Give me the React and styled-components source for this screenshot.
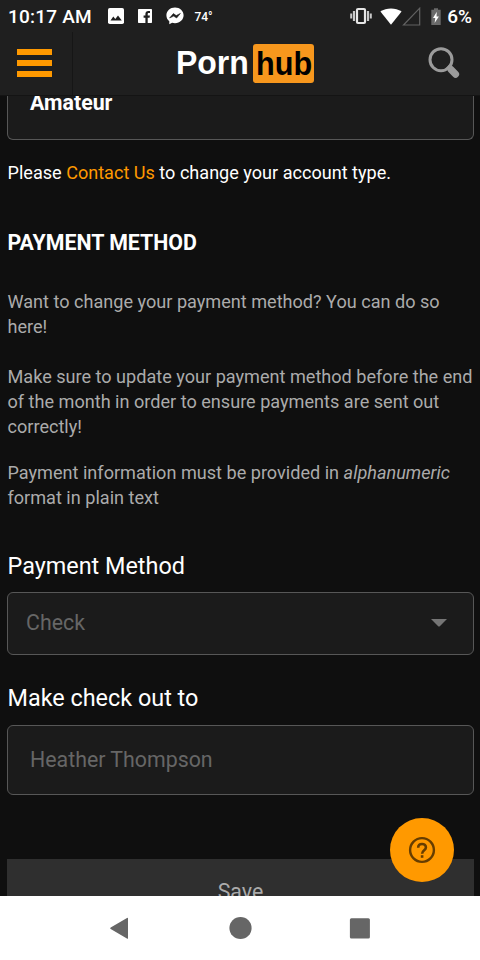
import React from 'react';

import styled, { createGlobalStyle } from 'styled-components';

const GlobalStyle = createGlobalStyle`
  * {
    box-sizing: border-box;
  }

  body {
    margin: 0;
    background: #0f0f0f;
    font-family: Roboto, sans-serif;
  }

  p, h2 {
    margin: 0;
  }
`

// Styled Components

const Screen = styled.div`
  display: flex;
  flex-direction: column;
  width: 480px;
  height: 960px;
  overflow: hidden;
  background: #0f0f0f;
  color: #fff;
`

const StatusBar = styled.div`
  display: flex;
  align-items: center;
  flex: 0 0 32px;
  padding: 0 8px;
  background: #1f1f1f;

  svg {
    flex: none;
  }
`

const Clock = styled.span`
  width: 99.5px;
  padding-top: 1px;
  font-size: 19px;
  font-weight: 500;
  line-height: 31px;
  letter-spacing: 0.2px;
  white-space: nowrap;
`

const Notifications = styled.div`
  display: flex;
  align-items: center;
  gap: 14px;
`

const Temperature = styled.span`
  margin-left: -3px;
  padding-top: 1px;
  font-size: 12px;
  font-weight: 500;
  letter-spacing: -0.1px;
`

const SystemIcons = styled.div`
  display: flex;
  align-items: center;
  margin-left: auto;
`

const Battery = styled.span`
  margin-left: 6px;
  padding-top: 1px;
  font-size: 19px;
  font-weight: 500;
  line-height: 31px;
`

const Header = styled.header`
  display: grid;
  grid-template-columns: 73px 1fr 73px;
  flex: 0 0 64px;
  background: #1f1f1f;
  border-bottom: 1px solid #141414;
`

const MenuButton = styled.div`
  display: flex;
  flex-direction: column;
  gap: 5px;
  padding: 17px 0 0 17px;
  border-right: 1px solid #161616;
`

const MenuLine = styled.span`
  width: 35px;
  height: 6px;
  background: #f90;
`

const Logo = styled.div`
  display: flex;
  align-items: flex-start;
  padding: 12px 0 0 103px;
  font-family: "Liberation Sans", Arial, sans-serif;
  font-size: 34px;
  font-weight: 700;
  line-height: 37px;
`

const LogoWord = styled.span`
  display: inline-block;
  transform: scaleX(${props => props.$scale});
  transform-origin: left center;
`

const LogoText = styled.span`
  width: 76.5px;
`

const LogoBadge = styled.span`
  width: 61.5px;
  height: 39px;
  padding-left: 3.5px;
  border-radius: 3px;
  background: #f7971d;
  color: #000;
  line-height: 39px;
`

const SearchButton = styled.div`
  padding: 14px 0 0 20px;
`

const Content = styled.main`
  position: relative;
  flex: 1;
  overflow: hidden;
  padding: 0 6px 0 7px;
`

const Field = styled.div`
  display: flex;
  align-items: center;
  justify-content: space-between;
  height: ${props => props.$height};
  padding: ${props => props.$padding};
  border: 1px solid #575757;
  border-radius: 6px;
  background: #1b1b1b;
  color: #666;
  font-size: 21.35px;
`

const AccountField = styled(Field)`
  height: 44px;
  padding: 0 22px 30px;
  border-top: 0;
  border-radius: 0 0 6px 6px;
  color: #fff;
  font-weight: 700;
`

const ContactNote = styled.p`
  margin: 20px 0 0 0.5px;
  font-size: 18.08px;
  line-height: 25px;
`

const ContactLink = styled.a`
  color: #f90;
`

const Heading = styled.h2`
  margin: 43px 0 0 0.5px;
  font-size: 21.35px;
  font-weight: 700;
  line-height: 30px;
`

const Text = styled.p`
  margin: ${props => props.$top} -8px 0 0.5px;
  color: #ababab;
  font-size: 18.1px;
  line-height: 25px;
  white-space: nowrap;
`

const Label = styled.div`
  margin: ${props => props.$top} 0 0 0.5px;
  padding-bottom: ${props => props.$gap};
  font-size: 23.4px;
  line-height: 30px;
`

const SaveButton = styled.div`
  height: 66px;
  margin-top: 64px;
  background: #2f2f2f;
  color: #ababab;
  font-size: 21.35px;
  line-height: 66px;
  text-align: center;
`

const HelpButton = styled.div`
  position: absolute;
  right: 26px;
  bottom: 14px;
  display: flex;
  align-items: center;
  justify-content: center;
  width: 64px;
  height: 64px;
  border-radius: 50%;
  background: #f90;
`

const NavigationBar = styled.nav`
  flex: 0 0 64px;
  display: flex;
  justify-content: center;
  gap: 96px;
  padding: 20px 2px 0 0;
  background: #fff;
`

// Icons

const ImageIcon = () => (
  <svg width="16" height="16" viewBox="0 0 16 16">
    <rect width="16" height="16" rx="1.8" fill="#fff" />
    <path d="M2.5 12.5 5.3 8.6 7.3 11 10 7.5 13.8 12.5Z" fill="#1f1f1f" />
  </svg>
)

const FacebookIcon = () => (
  <svg width="14" height="14" viewBox="0 0 14 14">
    <rect width="14" height="14" rx="0.7" fill="#fff" />
    <path d="M7.4 14V8.7H5.6V6.5h1.8V4.9c0-2 1.1-3 2.9-3h1.7v2h-1.2c-.9 0-1.1.5-1.1 1.2v1.4h2.2l-.3 2.2H9.7V14Z" fill="#1f1f1f" />
  </svg>
)

const MessengerIcon = () => (
  <svg width="18" height="18" viewBox="0 0 18 18">
    <path d="M9 .4C4.1.4.4 3.8.4 8.3c0 2.5 1.1 4.6 2.9 6v3l2.8-1.5c.9.3 1.9.4 2.9.4 4.9 0 8.6-3.5 8.6-7.9S13.9.4 9 .4Z" fill="#fff" />
    <path d="M3.6 11 7.4 6.6 10.2 8.6 14.4 6.4 10.6 11 7.7 9.1Z" fill="#1f1f1f" stroke="#1f1f1f" strokeWidth="0.6" />
  </svg>
)

const VibrateIcon = () => (
  <svg width="22" height="18" viewBox="0 0 22 18">
    <rect x="7" y="2" width="8" height="14" rx="1" fill="none" stroke="#e6e6e6" strokeWidth="2.2" />
    <path d="M4 4v10M18 4v10" stroke="#c8c8c8" strokeWidth="2.2" />
    <path d="M1.2 6.5v5M20.8 6.5v5" stroke="#c8c8c8" strokeWidth="2" />
  </svg>
)

const WifiIcon = () => (
  <svg width="30" height="17" viewBox="-8 0 30 17">
    <path d="M.4 3.6C6.5-.7 15.5-.7 21.6 3.6L11 16.7Z" fill="#fff" />
  </svg>
)

const SignalIcon = () => (
  <svg width="29" height="19" viewBox="0 0 29 19">
    <path d="M1.5 18H17.7V1.2Z" fill="none" stroke="#626262" strokeWidth="1.2" />
  </svg>
)

const BatteryIcon = () => (
  <svg width="10" height="17" viewBox="0 0 10 17">
    <path d="M.3 1.7H3V.2h4v1.5h2.7V17H.3Z" fill="#6a6a6a" />
    <path d="M5.8 3.8 2 10h2.3L3.6 15 7.9 8.4H5.5Z" fill="#fff" />
  </svg>
)

const SearchIcon = () => (
  <svg width="34" height="34" viewBox="0 0 34 34">
    <circle cx="14" cy="13.7" r="11" fill="none" stroke="#9b9b9b" strokeWidth="3" />
    <path d="M24 23.5 28.6 28.2" stroke="#9b9b9b" strokeWidth="7" strokeLinecap="round" />
    <path d="M20.5 20.3 25 25" stroke="#9b9b9b" strokeWidth="3.4" />
  </svg>
)

const ArrowIcon = () => (
  <svg width="16" height="8" viewBox="0 0 16 8">
    <path d="M0 0H16L8.8 7.2Q8 7.9 7.2 7.2Z" fill="#757575" />
  </svg>
)

const HelpIcon = () => (
  <svg width="28" height="28" viewBox="0 0 28 28" fill="none" stroke="#663d00">
    <circle cx="14" cy="14" r="11.9" strokeWidth="2.4" />
    <path d="M10.2 11.7C10.2 6.8 17.9 6.8 17.9 11.5 17.9 14.3 14.1 14.2 14.1 17.7" strokeWidth="2.6" />
    <rect x="12.8" y="19.2" width="2.6" height="2.6" fill="#663d00" stroke="none" />
  </svg>
)

const BackIcon = () => (
  <svg width="25" height="24" viewBox="0 0 25 24">
    <path d="M3.7 11.4 20 1.9Q21 1.4 21 2.6V22Q21 23.3 19.9 22.6L3.7 13.1Q2.5 12.3 3.7 11.4Z" fill="#666" />
  </svg>
)

const HomeIcon = () => (
  <svg width="24" height="24" viewBox="0 0 24 24">
    <circle cx="12.5" cy="12" r="11.1" fill="#666" />
  </svg>
)

const RecentIcon = () => (
  <svg width="24" height="24" viewBox="0 0 24 24">
    <rect x="1.9" y="2.2" width="20" height="20.3" rx="1.5" fill="#666" />
  </svg>
)

// Payment Settings Screen

export default function App() {
  return (
    <Screen>
      <GlobalStyle />
      <StatusBar>
        <Clock>10:17 AM</Clock>
        <Notifications>
          <ImageIcon />
          <FacebookIcon />
          <MessengerIcon />
          <Temperature>74°</Temperature>
        </Notifications>
        <SystemIcons>
          <VibrateIcon />
          <WifiIcon />
          <SignalIcon />
          <BatteryIcon />
          <Battery>6%</Battery>
        </SystemIcons>
      </StatusBar>
      <Header>
        <MenuButton>
          <MenuLine />
          <MenuLine />
          <MenuLine />
        </MenuButton>
        <Logo>
          <LogoText><LogoWord $scale={0.94}>Porn</LogoWord></LogoText>
          <LogoBadge><LogoWord $scale={0.9}>hub</LogoWord></LogoBadge>
        </Logo>
        <SearchButton><SearchIcon /></SearchButton>
      </Header>
      <Content>
        <AccountField>Amateur</AccountField>
        <ContactNote>
          Please <ContactLink>Contact Us</ContactLink> to change your account type.
        </ContactNote>
        <Heading>PAYMENT METHOD</Heading>
        <Text $top="31px">
          Want to change your payment method? You can do so<br />here!
        </Text>
        <Text $top="25px">
          Make sure to update your payment method before the end<br />
          of the month in order to ensure payments are sent out<br />
          correctly!
        </Text>
        <Text $top="21px">
          Payment information must be provided in <em>alphanumeric</em><br />
          format in plain text
        </Text>
        <Label $top="41px" $gap="11px">Payment Method</Label>
        <Field $height="63px" $padding="0 26px 2px 18px">
          Check
          <ArrowIcon />
        </Field>
        <Label $top="28px" $gap="12px">Make check out to</Label>
        <Field $height="70px" $padding="0 22px 2px">Heather Thompson</Field>
        <SaveButton>Save</SaveButton>
        <HelpButton><HelpIcon /></HelpButton>
      </Content>
      <NavigationBar>
        <BackIcon />
        <HomeIcon />
        <RecentIcon />
      </NavigationBar>
    </Screen>
  );
}
